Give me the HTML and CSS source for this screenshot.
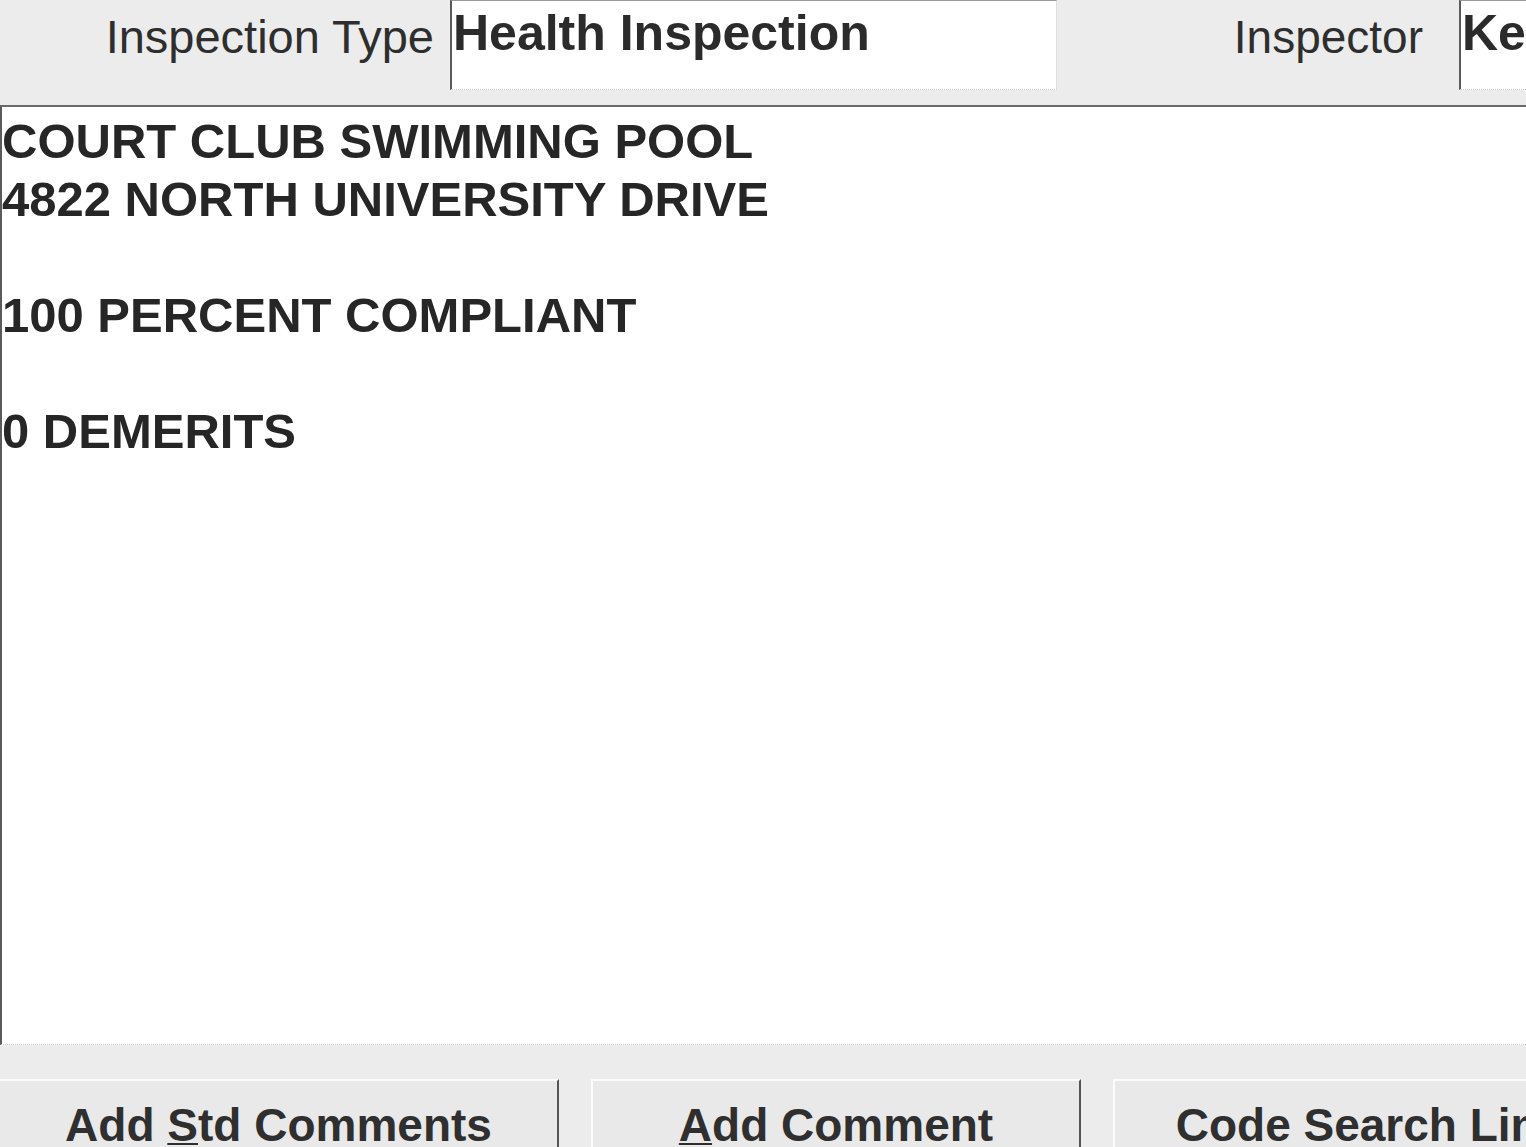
FILE: index.html
```html
<!DOCTYPE html>
<html lang="en">
<head>
<meta charset="utf-8">
<title>Inspection</title>
<link rel="stylesheet" href="styles.css">
</head>
<body>
<div class="window">
  <div class="topbar">
    <div class="label label-type">Inspection Type</div>
    <div class="field field-type">Health Inspection</div>
    <div class="label label-inspector">Inspector</div>
    <div class="field field-inspector">Ke</div>
  </div>
  <div class="comments">
    <div class="line">COURT CLUB SWIMMING POOL</div>
    <div class="line">4822 NORTH UNIVERSITY DRIVE</div>
    <div class="line">&nbsp;</div>
    <div class="line">100 PERCENT COMPLIANT</div>
    <div class="line">&nbsp;</div>
    <div class="line">0 DEMERITS</div>
  </div>
  <div class="buttonbar">
    <div class="btn btn-std">Add <u>S</u>td Comments</div>
    <div class="btn btn-add"><u>A</u>dd Comment</div>
    <div class="btn btn-code">Code Search Link</div>
  </div>
</div>
</body>
</html>
```

FILE: styles.css
```css
html, body {
  margin: 0;
  padding: 0;
  background: #ececec;
  overflow: hidden;
}

.window {
  width: 1526px;
  height: 1147px;
  overflow: hidden;
  font-family: "Liberation Sans", Arial, sans-serif;
  color: #2b2b2b;
  background: #ececec;
}

.topbar {
  display: flex;
  align-items: flex-start;
  height: 105px;
  white-space: nowrap;
}

.label {
  font-size: 46px;
  line-height: 74px;
  text-align: right;
  color: #2e2e2e;
}

.label-type {
  width: 434px;
  padding-right: 16px;
  flex: none;
  font-size: 47px;
}

.label-inspector {
  flex: 1;
  padding-right: 36px;
}

.field {
  flex: none;
  box-sizing: border-box;
  height: 90px;
  background: #ffffff;
  border-top: 1px solid #9a9a9a;
  border-left: 2px solid #5a5a5a;
  border-bottom: 1px dotted #cfcfcf;
  font-size: 50px;
  font-weight: bold;
  line-height: 58px;
  padding-top: 3px;
  padding-left: 1px;
  overflow: hidden;
}

.field-type {
  width: 607px;
  border-right: 1px solid #dedede;
}

.field-inspector {
  width: 67px;
}

.comments {
  box-sizing: border-box;
  height: 940px;
  background: #ffffff;
  border-top: 2px solid #6a6a6a;
  border-left: 2px solid #5a5a5a;
  border-bottom: 1px dotted #cfcfcf;
  padding-top: 5px;
  font-size: 49px;
  font-weight: bold;
  line-height: 58px;
  color: #262626;
  white-space: nowrap;
}

.buttonbar {
  display: flex;
  gap: 32px;
  padding-top: 34px;
}

.btn {
  flex: none;
  box-sizing: border-box;
  height: 100px;
  background: #e9e9e9;
  border-top: 2px solid #fbfbfb;
  border-left: 2px solid #fbfbfb;
  border-right: 2px solid #555555;
  padding-top: 18px;
  font-size: 46px;
  font-weight: bold;
  line-height: 52px;
  text-align: center;
  white-space: nowrap;
  color: #2f2f2f;
}

.btn u {
  text-decoration-thickness: 2px;
  text-underline-offset: 2px;
}

.btn-std {
  width: 559px;
  border-left: none;
}

.btn-add {
  width: 490px;
}

.btn-code {
  width: 490px;
  padding-left: 24px;
}
```
